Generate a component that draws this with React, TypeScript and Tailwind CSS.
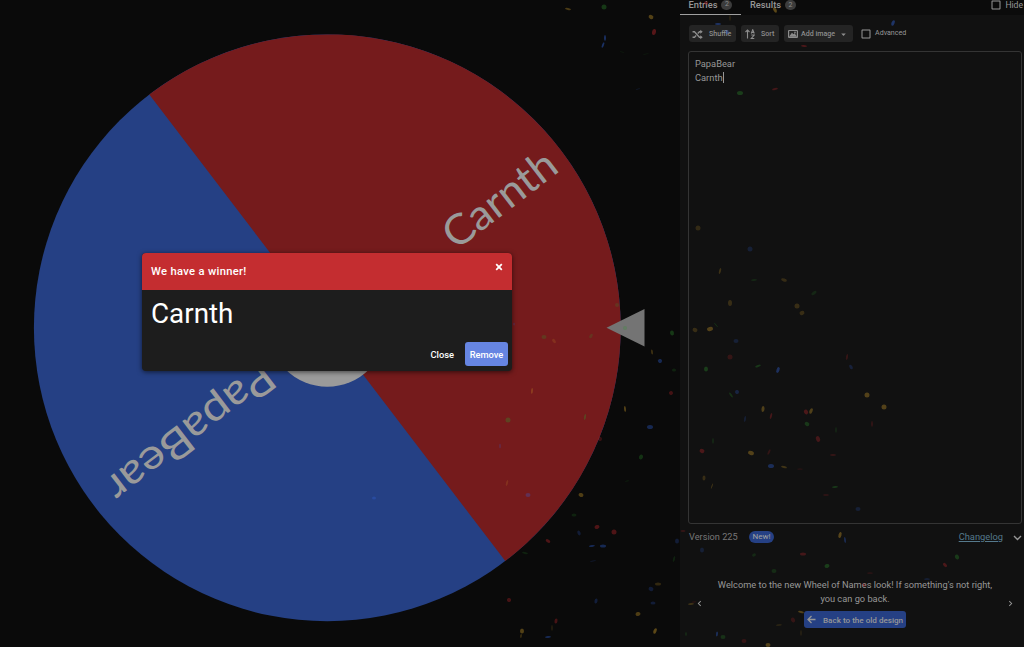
import type { ReactNode } from 'react';
import {
  MdArrowDropDown,
  MdCheckBoxOutlineBlank,
  MdChevronLeft,
  MdChevronRight,
} from 'react-icons/md';

const colors = {
  r: '#c8282d',
  b: '#3369e8',
  g: '#2f9a2f',
  y: '#d8a52c',
};

type Piece = [x: number, y: number, w: number, h: number, angle: number, color: keyof typeof colors, opacity: number];

const confetti: Piece[] = [
  [568, 9, 6, 2, 10, 'y', 0.4],
  [604, 7, 5, 5, 0, 'g', 0.4],
  [651, 17, 5, 4, 30, 'y', 0.45],
  [654, 32, 4, 6, 10, 'r', 0.5],
  [605, 38, 2, 6, 0, 'b', 0.5],
  [603, 45, 2, 6, 20, 'b', 0.5],
  [622, 52, 5, 1, 10, 'g', 0.12],
  [646, 54, 6, 1, -10, 'g', 0.12],
  [638, 89, 5, 1, -20, 'b', 0.15],
  [706, 3, 4, 3, 20, 'r', 0.5],
  [775, 10, 3, 6, -30, 'y', 0.5],
  [730, 18, 1, 6, 0, 'y', 0.3],
  [718, 24, 6, 2, 0, 'b', 0.5],
  [727, 32, 3, 4, 20, 'b', 0.5],
  [893, 23, 3, 6, 25, 'b', 0.5],
  [804, 46, 6, 2, 5, 'r', 0.4],
  [740, 93, 6, 4, 0, 'g', 0.4],
  [775, 89, 6, 2, -15, 'r', 0.35],
  [698, 228, 5, 5, 0, 'y', 0.22],
  [750, 249, 5, 5, 0, 'b', 0.22],
  [720, 271, 2, 6, 15, 'y', 0.28],
  [754, 280, 6, 2, -5, 'g', 0.2],
  [784, 280, 6, 3, 20, 'y', 0.24],
  [814, 293, 6, 3, -35, 'g', 0.2],
  [730, 303, 4, 6, 0, 'y', 0.25],
  [797, 306, 5, 5, 0, 'y', 0.25],
  [802, 313, 5, 4, -20, 'y', 0.25],
  [716, 325, 1, 6, -40, 'g', 0.3],
  [695, 330, 5, 4, 20, 'y', 0.25],
  [710, 329, 6, 4, -15, 'y', 0.42],
  [736, 341, 5, 4, 0, 'b', 0.22],
  [730, 357, 5, 5, 0, 'r', 0.25],
  [847, 357, 2, 6, 10, 'r', 0.25],
  [706, 369, 4, 5, 0, 'g', 0.4],
  [758, 366, 6, 2, -20, 'g', 0.35],
  [778, 370, 3, 6, 20, 'b', 0.45],
  [851, 367, 3, 5, -30, 'b', 0.25],
  [731, 395, 2, 6, -35, 'g', 0.3],
  [737, 392, 4, 4, 20, 'b', 0.28],
  [867, 395, 5, 5, 0, 'y', 0.42],
  [884, 407, 5, 5, 0, 'y', 0.42],
  [763, 409, 3, 6, 5, 'y', 0.4],
  [771, 416, 2, 6, 15, 'r', 0.35],
  [745, 419, 2, 6, 10, 'b', 0.2],
  [806, 412, 4, 5, -30, 'r', 0.4],
  [811, 411, 3, 6, 25, 'y', 0.4],
  [807, 424, 5, 4, 30, 'g', 0.35],
  [836, 430, 1, 6, 0, 'g', 0.35],
  [872, 424, 1, 6, 0, 'r', 0.45],
  [818, 439, 4, 6, -20, 'r', 0.35],
  [713, 441, 1, 6, 0, 'g', 0.4],
  [702, 451, 5, 4, 20, 'r', 0.4],
  [751, 453, 6, 4, 20, 'y', 0.42],
  [769, 452, 2, 6, 25, 'r', 0.22],
  [833, 455, 6, 2, 0, 'r', 0.25],
  [771, 466, 6, 4, 0, 'b', 0.42],
  [784, 467, 6, 2, 15, 'y', 0.3],
  [800, 469, 6, 1, 0, 'r', 0.22],
  [704, 478, 3, 5, 5, 'y', 0.25],
  [712, 486, 1, 6, 20, 'y', 0.3],
  [835, 487, 6, 2, -5, 'g', 0.35],
  [826, 495, 6, 2, 0, 'r', 0.2],
  [858, 509, 5, 4, 0, 'b', 0.22],
  [514, 324, 2, 3, 0, 'b', 0.22],
  [617, 305, 4, 4, 0, 'g', 0.25],
  [544, 337, 5, 4, 0, 'g', 0.3],
  [554, 341, 3, 5, -35, 'y', 0.2],
  [591, 336, 3, 5, 30, 'g', 0.25],
  [625, 328, 4, 4, 0, 'g', 0.3],
  [672, 333, 4, 5, -10, 'g', 0.4],
  [652, 352, 2, 5, -10, 'y', 0.3],
  [660, 361, 4, 4, 20, 'b', 0.42],
  [674, 370, 4, 3, 0, 'g', 0.22],
  [671, 393, 4, 4, -30, 'r', 0.38],
  [532, 391, 2, 6, 5, 'y', 0.3],
  [625, 409, 2, 6, -5, 'y', 0.45],
  [585, 417, 2, 6, 10, 'g', 0.4],
  [508, 420, 5, 5, 0, 'g', 0.4],
  [650, 427, 6, 4, 0, 'b', 0.4],
  [600, 439, 4, 4, 20, 'r', 0.3],
  [641, 457, 4, 5, 25, 'g', 0.35],
  [627, 481, 4, 1, -10, 'g', 0.18],
  [500, 446, 2, 5, 0, 'b', 0.22],
  [507, 483, 2, 6, 15, 'y', 0.2],
  [528, 495, 5, 4, 0, 'b', 0.35],
  [374, 498, 4, 3, 0, 'b', 0.35],
  [581, 495, 5, 4, 15, 'y', 0.42],
  [574, 515, 5, 3, 0, 'g', 0.22],
  [597, 527, 5, 4, -15, 'r', 0.45],
  [614, 532, 5, 5, 0, 'r', 0.45],
  [579, 533, 3, 5, -25, 'b', 0.25],
  [548, 541, 5, 3, 30, 'r', 0.45],
  [592, 546, 6, 2, -8, 'b', 0.42],
  [603, 546, 6, 3, 0, 'b', 0.42],
  [525, 553, 6, 2, 10, 'g', 0.2],
  [593, 561, 6, 1, -10, 'b', 0.2],
  [677, 541, 4, 5, 0, 'b', 0.25],
  [674, 559, 2, 6, 15, 'g', 0.2],
  [658, 584, 6, 3, 0, 'y', 0.25],
  [651, 589, 5, 4, 20, 'b', 0.25],
  [653, 603, 5, 3, 0, 'b', 0.25],
  [596, 601, 3, 5, 15, 'b', 0.28],
  [509, 600, 4, 4, -20, 'r', 0.4],
  [638, 614, 5, 4, -10, 'y', 0.42],
  [556, 621, 3, 5, 10, 'r', 0.4],
  [552, 628, 1, 6, 0, 'y', 0.3],
  [522, 631, 4, 5, 0, 'y', 0.45],
  [521, 636, 2, 4, 10, 'y', 0.25],
  [548, 637, 6, 2, -5, 'b', 0.42],
  [655, 631, 3, 6, 25, 'y', 0.5],
  [683, 531, 5, 2, 0, 'r', 0.25],
  [694, 602, 5, 1, -5, 'r', 0.25],
  [691, 604, 6, 2, -5, 'y', 0.28],
  [702, 550, 4, 5, 0, 'b', 0.22],
  [754, 555, 4, 3, -30, 'g', 0.22],
  [803, 554, 6, 3, 0, 'r', 0.35],
  [840, 535, 3, 6, 15, 'y', 0.45],
  [845, 540, 2, 6, -8, 'b', 0.35],
  [827, 566, 5, 4, -15, 'g', 0.4],
  [774, 571, 5, 4, 0, 'g', 0.25],
  [957, 557, 4, 5, -30, 'g', 0.38],
  [945, 565, 5, 3, 45, 'r', 0.4],
  [870, 573, 6, 1, 0, 'r', 0.3],
  [927, 579, 6, 1, 0, 'b', 0.4],
  [864, 585, 4, 3, 45, 'r', 0.4],
  [801, 612, 6, 2, 15, 'y', 0.42],
  [793, 620, 4, 5, -30, 'r', 0.25],
  [779, 625, 6, 1, -5, 'y', 0.3],
  [717, 634, 2, 5, 5, 'b', 0.42],
  [723, 637, 5, 4, 0, 'g', 0.3],
  [744, 641, 5, 4, 0, 'r', 0.25],
  [768, 645, 5, 4, 0, 'y', 0.42],
  [801, 633, 1, 6, 0, 'y', 0.25],
  [686, 634, 2, 4, 0, 'g', 0.22],
];

function Confetti() {
  return (
    <svg className="pointer-events-none absolute inset-0 z-10 h-full w-full opacity-80" viewBox="0 0 1024 647">
      {confetti.map(([x, y, w, h, angle, color, opacity], i) => (
        <ellipse
          key={i}
          cx={x}
          cy={y}
          rx={w / 2}
          ry={h / 2}
          fill={colors[color]}
          opacity={opacity}
          transform={`rotate(${angle} ${x} ${y})`}
        />
      ))}
    </svg>
  );
}

function Wheel() {
  return (
    <svg className="h-full w-full" viewBox="0 0 680 647">
      <g transform="translate(327.3 327.8)">
        <circle r="293.4" fill="#254084" />
        <path d="M-293.4 0A293.4 293.4 0 0 1 293.4 0Z" fill="#751b1c" transform="rotate(52.65)" />
        <circle r="59" fill="#9a9a9a" />
        <g fill="#9a9a9a" fontFamily="Lato, sans-serif" fontSize="42">
          <text transform="rotate(-37.4)" x="149" y="17" textLength="132" lengthAdjust="spacingAndGlyphs">
            Carnth
          </text>
          <text transform="rotate(142.6)" x="72" y="14" textLength="200" lengthAdjust="spacingAndGlyphs">
            PapaBear
          </text>
        </g>
      </g>
      <path d="M606.5 327.8 644.5 309V346.5Z" fill="#747474" />
    </svg>
  );
}

function ToolButton({ icon, children, className = '' }: { icon: ReactNode; children: ReactNode; className?: string }) {
  return (
    <button
      className={`flex h-[17px] items-center rounded-[3px] bg-[#242424] pt-px text-[7.1px] font-medium text-[#8d8d8d] ${className}`}
    >
      {icon}
      {children}
    </button>
  );
}

function ShuffleIcon() {
  return (
    <svg width="11" height="11" viewBox="0 0 20 20" fill="none" stroke="currentColor" strokeWidth="2.4">
      <path d="M1 5h3.500l9 10H17M1 15h3.500l3-3.300M10.500 8.300l3-3.300H17" />
      <path d="m15 1.500 4.500 3.500L15 8.500zM15 11.500l4.500 3.500-4.500 3.500z" fill="currentColor" stroke="none" />
    </svg>
  );
}

function SortIcon() {
  return (
    <svg width="10" height="10" viewBox="0 0 20 20" fill="none" stroke="currentColor" strokeWidth="2.2">
      <path d="M5 19V2M1 6l4-4 4 4M12.5 9l3-7.5 3 7.5M13.5 7h4M12.500 12h6l-6 7h6" />
    </svg>
  );
}

function ImageIcon() {
  return (
    <svg width="10" height="10" viewBox="0 0 20 20" fill="none" stroke="currentColor" strokeWidth="2.4">
      <rect x="1.200" y="3" width="17.600" height="14" rx="1" />
      <path d="m4 14.500 4-5 3 3 2-2 3 4z" fill="currentColor" />
      <circle cx="14" cy="7" r="0.600" />
    </svg>
  );
}

function BackIcon() {
  return (
    <svg width="11" height="11" viewBox="0 0 11 11" fill="none" stroke="currentColor" strokeWidth="1.300">
      <path d="M9.500 5.500H2M5.500 2 2 5.500 5.500 9" />
    </svg>
  );
}

function CaretIcon() {
  return (
    <svg className="ml-[10px] mr-[2px]" width="9" height="9" viewBox="0 0 9 9" fill="none" stroke="#979797" strokeWidth="1.400">
      <path d="m1 3 3.500 3.500L8 3" />
    </svg>
  );
}

function CloseIcon() {
  return (
    <svg className="mb-[9px] ml-auto" width="10" height="10" viewBox="0 0 10 10" stroke="currentColor" strokeWidth="1.8">
      <path d="m2.200 2.200 5.600 5.600M7.800 2.200 2.200 7.800" />
    </svg>
  );
}

function Count({ children }: { children: ReactNode }) {
  return (
    <span className="flex h-[10px] w-[11px] items-center justify-center rounded-full bg-[#3c3c3c] text-[7px] font-normal text-[#8d8d8d]">
      {children}
    </span>
  );
}

function Sidebar() {
  return (
    <aside className="flex h-full w-[344px] shrink-0 flex-col bg-[#111111] text-[#979797]">
      <div className="flex h-[15px] bg-[#0b0b0b] text-[9.3px] font-medium">
        <div className="flex w-[61px] items-center justify-center gap-1 border-b border-[#a0a0a0] pb-[5px]">
          Entries <Count>2</Count>
        </div>
        <div className="ml-[9px] flex items-center gap-1 pb-[5px]">
          Results <Count>2</Count>
        </div>
        <div className="ml-auto flex items-center gap-[3px] pr-px pb-[5px] text-[8.6px] font-normal">
          <MdCheckBoxOutlineBlank className="size-[12px]" /> Hide
        </div>
      </div>

      <div className="ml-[9px] mt-[10px] flex h-[17px] items-center gap-[5px]">
        <ToolButton className="w-[47px] gap-[6px] pl-[3px]" icon={<ShuffleIcon />}>
          Shuffle
        </ToolButton>
        <ToolButton className="w-[38px] gap-1.5 pl-[4px]" icon={<SortIcon />}>
          Sort
        </ToolButton>
        <ToolButton className="w-[69px] gap-[3px] pl-[4px]" icon={<ImageIcon />}>
          Add image
          <MdArrowDropDown className="size-[11px]" />
        </ToolButton>
        <label className="ml-[2px] flex items-center gap-[3px] text-[7.1px]">
          <MdCheckBoxOutlineBlank className="size-[12px]" /> Advanced
        </label>
      </div>

      <div className="ml-[8px] mr-[2px] mt-[9px] h-[473px] rounded-[3px] border border-[#343434] px-[6px] pt-[5px] text-[9.3px] leading-[14px]">
        <p>PapaBear</p>
        <p>
          Carnth<span className="inline-block h-[11px] w-px bg-[#979797] align-[-2px]" />
        </p>
      </div>

      <div className="ml-[9px] mt-[5px] flex h-[16px] items-center text-[9.2px] text-[#777777]">
        <span className="w-[49px] whitespace-nowrap">Version 225</span>
        <span className="ml-[11px] flex h-[12px] w-[25px] items-center justify-center rounded-full bg-[#254084] text-[8px] text-[#a2a2a2]">
          New!
        </span>
        <a className="ml-auto text-[9.3px] text-[#55798c] underline">Changelog</a>
        <CaretIcon />
      </div>

      <div className="ml-[14px] mr-[8px] mt-[33px] flex items-center">
        <MdChevronLeft className="mt-[1px] size-[11px] shrink-0" />
        <div className="flex flex-1 flex-col items-center text-center text-[9.25px] leading-[14px]">
          <p className="w-[286px]">Welcome to the new Wheel of Names look! If something's not right, you can go back.</p>
          <button className="mt-[5px] flex h-[17px] w-[102px] items-center gap-[6px] whitespace-nowrap rounded-[3px] bg-[#254084] pl-[2px] text-[8.1px] font-medium">
            <BackIcon />
            Back to the old design
          </button>
        </div>
        <MdChevronRight className="mt-[1px] size-[11px] shrink-0" />
      </div>
    </aside>
  );
}

function WinnerDialog() {
  return (
    <div className="absolute left-[142px] top-[253px] z-20 flex h-[118px] w-[370px] flex-col overflow-hidden rounded-[4px] bg-[#1d1d1d] text-white shadow-[0_1px_5px_rgba(0,0,0,0.6)]">
      <div className="flex h-[37px] items-center bg-[#c42d30] pl-[9px] pr-[8px]">
        <h2 className="mt-[2px] text-[11.2px] font-medium tracking-[0.32px]">We have a winner!</h2>
        <CloseIcon />
      </div>
      <p className="pl-[9px] pt-[6px] text-[27.8px] leading-[36px]">Carnth</p>
      <div className="mt-[10px] flex h-[24px] items-center justify-end gap-[11px] pr-[4px] text-[9.3px] font-medium">
        <button className="pt-px">Close</button>
        <button className="h-[24px] w-[43px] rounded-[3px] bg-[#6685e2] pt-px">Remove</button>
      </div>
    </div>
  );
}

export default function App() {
  return (
    <div className="relative flex h-[647px] w-[1024px] overflow-hidden bg-[#0a0a0a] font-['Roboto',sans-serif]">
      <main className="h-full w-[680px] shrink-0">
        <Wheel />
      </main>
      <Sidebar />
      <Confetti />
      <WinnerDialog />
    </div>
  );
}
